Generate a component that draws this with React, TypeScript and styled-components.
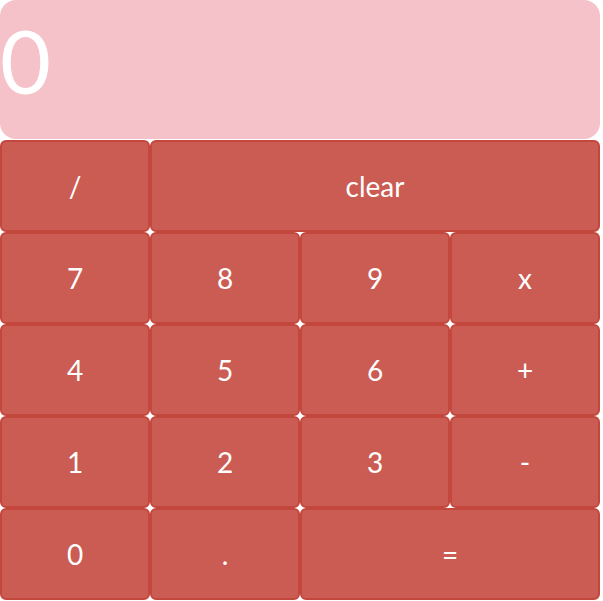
import styled, { createGlobalStyle } from "styled-components";

const GlobalStyle = createGlobalStyle`
    body {
        margin: 0;
        background: #ffffff;
        font-family: Lato, "Liberation Sans", sans-serif;
    }
`;

const keys: { label: string; span?: number }[] = [
    { label: "/" },
    { label: "clear", span: 3 },
    { label: "7" },
    { label: "8" },
    { label: "9" },
    { label: "x" },
    { label: "4" },
    { label: "5" },
    { label: "6" },
    { label: "+" },
    { label: "1" },
    { label: "2" },
    { label: "3" },
    { label: "-" },
    { label: "0" },
    { label: "." },
    { label: "=", span: 2 },
];

export default function App() {
    return (
        <>
            <GlobalStyle />
            <SCalculator>
                <SDisplay>0</SDisplay>
                <SKeypad>
                    {keys.map((k) => (
                        <SKey key={k.label} $span={k.span ?? 1}>
                            {k.label}
                        </SKey>
                    ))}
                </SKeypad>
            </SCalculator>
        </>
    );
}

const SCalculator = styled.div`
    width: 600px;
    display: flex;
    flex-direction: column;
    gap: 1px;
`;

const SDisplay = styled.div`
    height: 139px;
    background: #f5c2c9;
    border-radius: 16px;
    color: #ffffff;
    font-size: 88px;
    line-height: 120px;
    padding-left: 0;
    box-sizing: border-box;
`;

const SKeypad = styled.div`
    display: grid;
    grid-template-columns: repeat(4, 150px);
    grid-auto-rows: 92px;
`;

const SKey = styled.button<{ $span: number }>`
    grid-column: span ${(p) => p.$span};
    margin: 0;
    padding: 0;
    background: #cb5c53;
    border: 2px solid #c4473e;
    border-radius: 6px;
    color: #ffffff;
    font-family: Lato, "Liberation Sans", sans-serif;
    font-size: 28px;
    cursor: pointer;
`;
